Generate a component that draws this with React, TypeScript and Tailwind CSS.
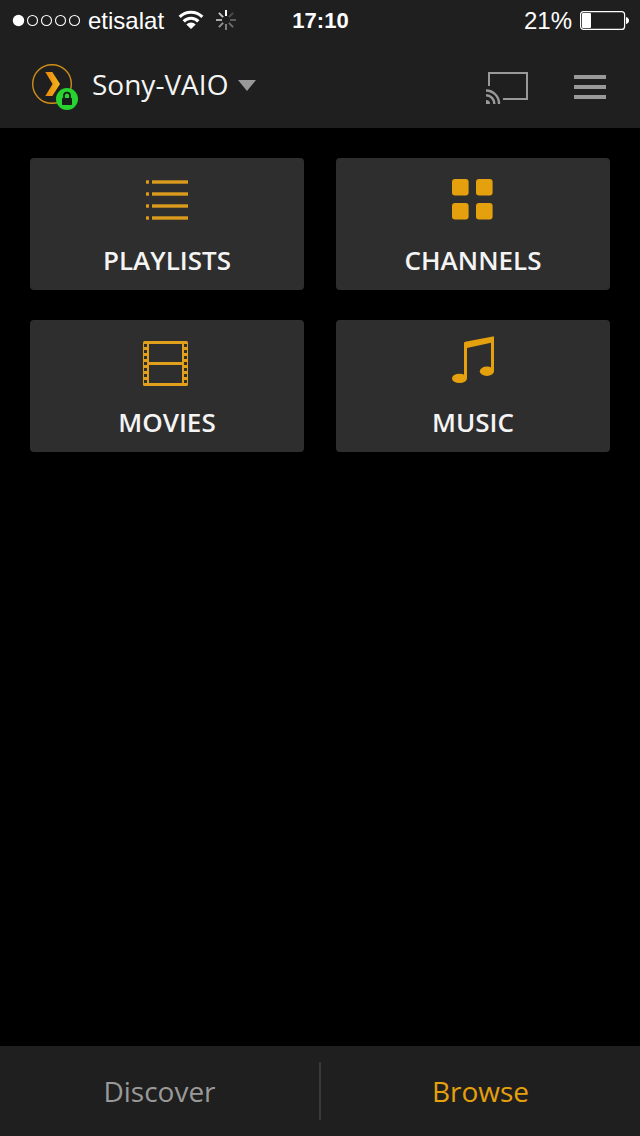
import React, { useState } from "react";

const tiles = [
  { label: "PLAYLISTS", icon: <PlaylistIcon /> },
  { label: "CHANNELS", icon: <ChannelsIcon /> },
  { label: "MOVIES", icon: <FilmIcon /> },
  { label: "MUSIC", icon: <MusicIcon /> },
];

const tabs = ["Discover", "Browse"];

function PlaylistIcon() {
  return (
    <svg className="w-[48px] h-[52px]" viewBox="0 0 48 52" fill="#dc9a1c" aria-hidden="true">
      {[6, 18, 30, 42].map((y) => (
        <g key={y}>
          <rect x="3" y={y + 0.3} width="3" height="3.4" />
          <rect x="9" y={y + 0.3} width="36" height="3.4" />
        </g>
      ))}
    </svg>
  );
}

function ChannelsIcon() {
  return (
    <svg className="w-[48px] h-[52px]" viewBox="0 0 48 52" fill="#e5a00d" aria-hidden="true">
      <rect x="3" y="5" width="16.6" height="16.6" rx="3" />
      <rect x="27" y="5" width="16.6" height="16.6" rx="3" />
      <rect x="3" y="29" width="16.6" height="16.6" rx="3" />
      <rect x="27" y="29" width="16.6" height="16.6" rx="3" />
    </svg>
  );
}

function FilmIcon() {
  return (
    <svg className="w-[48px] h-[52px]" viewBox="0 0 48 52" aria-hidden="true">
      <rect x="0" y="5" width="45" height="45" rx="1.5" fill="#e0a01c" />
      <g fill="#2e2e2e">
        <rect x="6" y="8" width="33" height="18" />
        <rect x="6" y="29" width="33" height="18" />
        {[8, 14, 20, 26, 32, 38, 44].map((y) => (
          <g key={y}>
            <rect x="1" y={y} width="3" height="3" />
            <rect x="41" y={y} width="3" height="3" />
          </g>
        ))}
      </g>
    </svg>
  );
}

function MusicIcon() {
  return (
    <svg className="w-[48px] h-[52px]" viewBox="0 0 48 52" fill="#e5a00d" aria-hidden="true">
      <path d="M15 7.2Q15 6 16.2 5.7L43.8 0.4Q45 0.2 45 1.4V35.5H42V6.7L18 12V43H15Z" />
      <ellipse cx="10.5" cy="42.4" rx="7.5" ry="4.7" />
      <ellipse cx="37.9" cy="35.2" rx="7.1" ry="4.7" />
    </svg>
  );
}

function StatusBar() {
  return (
    <div className="grid grid-cols-[1fr_auto_1fr] items-center h-10 pt-0.5 pl-3 pr-[11px] font-['Liberation_Sans',Arial,sans-serif] text-2xl leading-9 text-white">
      <div className="flex items-center">
        <svg className="w-[70px] h-[38px]" viewBox="0 2 70 38" aria-hidden="true">
          <circle cx="6.5" cy="20.5" r="5.7" fill="#fff" />
          {[20.5, 34.5, 48.5, 62.5].map((cx) => (
            <circle key={cx} cx={cx} cy="20.5" r="5" fill="none" stroke="#fff" strokeWidth="1.1" />
          ))}
        </svg>
        <span className="ml-1.5">etisalat</span>
        {/* Wifi */}
        <svg className="ml-3.5 w-[26px] h-[38px]" viewBox="0 2 26 38" fill="none" stroke="#fff" strokeWidth="3.2" aria-hidden="true">
          <path d="M1.7 16.9A16 16 0 0 1 24.3 16.9" />
          <path d="M5.7 21.3A10.3 10.3 0 0 1 20.3 21.3" />
          <path d="M13 29L8.3 24.4A6.7 6.7 0 0 1 17.7 24.4Z" fill="#fff" stroke="none" />
        </svg>
        {/* Network activity */}
        <svg className="ml-3 w-[20px] h-[38px]" viewBox="0 2 20 38" stroke="#fff" strokeWidth="2" aria-hidden="true">
          <path d="M10 10V16" />
          <path d="M12.9 17.1L17.1 12.9" opacity="0.2" />
          <path d="M14 20H20" opacity="0.27" />
          <path d="M12.9 22.9L17.1 27.1" opacity="0.35" />
          <path d="M10 24V30" opacity="0.42" />
          <path d="M7.1 22.9L2.9 27.1" opacity="0.52" />
          <path d="M6 20H0" opacity="0.62" />
          <path d="M7.1 17.1L2.9 12.9" opacity="0.75" />
        </svg>
      </div>
      <span className="font-bold text-[22px]">17:10</span>
      <div className="flex items-center justify-end gap-2">
        <span>21%</span>
        <svg className="w-[49px] h-[38px]" viewBox="0 2 49 38" aria-hidden="true">
          <rect x="0.6" y="11.6" width="44" height="17.8" rx="3" fill="none" stroke="#fff" strokeWidth="1.2" />
          <rect x="2" y="13" width="9" height="15" rx="1" fill="#fff" />
          <path d="M46 17Q49 18 49 20.5T46 24Z" fill="#fff" />
        </svg>
      </div>
    </div>
  );
}

function ServerIcon() {
  return (
    <svg className="w-[46px] h-[54px]" viewBox="0 -6 46 54" aria-hidden="true">
      <defs>
        <linearGradient id="chevron" x1="0" y1="0" x2="1" y2="0">
          <stop offset="0" stopColor="#e8850f" />
          <stop offset="1" stopColor="#f5b81c" />
        </linearGradient>
      </defs>
      <circle cx="20" cy="21" r="19.3" fill="none" stroke="#d08e16" strokeWidth="1.4" />
      <path d="M13.3 9H20.3L28 21L20.3 33H13.3L20.6 21Z" fill="url(#chevron)" />
      <circle cx="35" cy="36" r="11" fill="#27d32e" />
      <rect x="30" y="35" width="10" height="7" rx="0.8" fill="#1a1a1a" />
      <path d="M32 35V32.5A3 2.9 0 0 1 38 32.5V35" fill="none" stroke="#1a1a1a" strokeWidth="1.8" />
    </svg>
  );
}

export default function App() {
  const [activeTab, setActiveTab] = useState("Browse");

  return (
    <div className="min-h-screen flex flex-col bg-black text-[#f4f4f4] font-['Open_Sans',sans-serif]">
      <header className="bg-[#1f1f1f]">
        <StatusBar />
        <div className="flex items-center justify-between h-[88px] pl-8 pr-[34px]">
          <button type="button" className="flex items-center text-[28px] leading-10">
            <ServerIcon />
            <span className="ml-3.5">Sony-VAIO</span>
            <svg className="ml-2.5 w-[18px] h-[14px]" viewBox="0 0 18 14" fill="#999" aria-hidden="true">
              <path d="M0 3H18L9 14Z" />
            </svg>
          </button>
          <div className="flex items-center gap-[46px]">
            <button type="button" aria-label="Cast">
              <svg className="w-[42px] h-[40px]" viewBox="0 0 42 40" fill="none" stroke="#999" strokeWidth="2" aria-hidden="true">
                <path d="M3 22V9H41V35H17" />
                <g strokeWidth="2.4">
                  <path d="M0 26.5A13 13 0 0 1 13 40" />
                  <path d="M0 31.3A8.3 8.3 0 0 1 8.3 40" />
                </g>
                <path d="M0 36A4 4 0 0 1 4 40H0Z" fill="#999" stroke="none" />
              </svg>
            </button>
            <button type="button" aria-label="Menu">
              <svg className="w-[32px] h-[40px]" viewBox="0 0 32 40" fill="#999" aria-hidden="true">
                <rect y="11" width="32" height="4" />
                <rect y="21" width="32" height="4" />
                <rect y="31" width="32" height="4" />
              </svg>
            </button>
          </div>
        </div>
      </header>

      <main className="flex-grow p-[30px]">
        <div className="grid grid-cols-2 gap-x-8 gap-y-[30px]">
          {tiles.map((tile) => (
            <button
              key={tile.label}
              type="button"
              className="flex flex-col items-center gap-4 pt-4 pb-3 rounded bg-[#2e2e2e] text-[26px] leading-9 font-semibold"
            >
              {tile.icon}
              {tile.label}
            </button>
          ))}
        </div>
      </main>

      <nav className="flex h-[90px] py-4 bg-[#1f1f1f] divide-x-2 divide-[#3a3a3a]">
        {tabs.map((tab) => (
          <button
            key={tab}
            type="button"
            onClick={() => setActiveTab(tab)}
            className={`flex-1 text-[28px] leading-10 ${activeTab === tab ? "text-[#e5a00d]" : "text-[#999]"}`}
          >
            {tab}
          </button>
        ))}
      </nav>
    </div>
  );
}
